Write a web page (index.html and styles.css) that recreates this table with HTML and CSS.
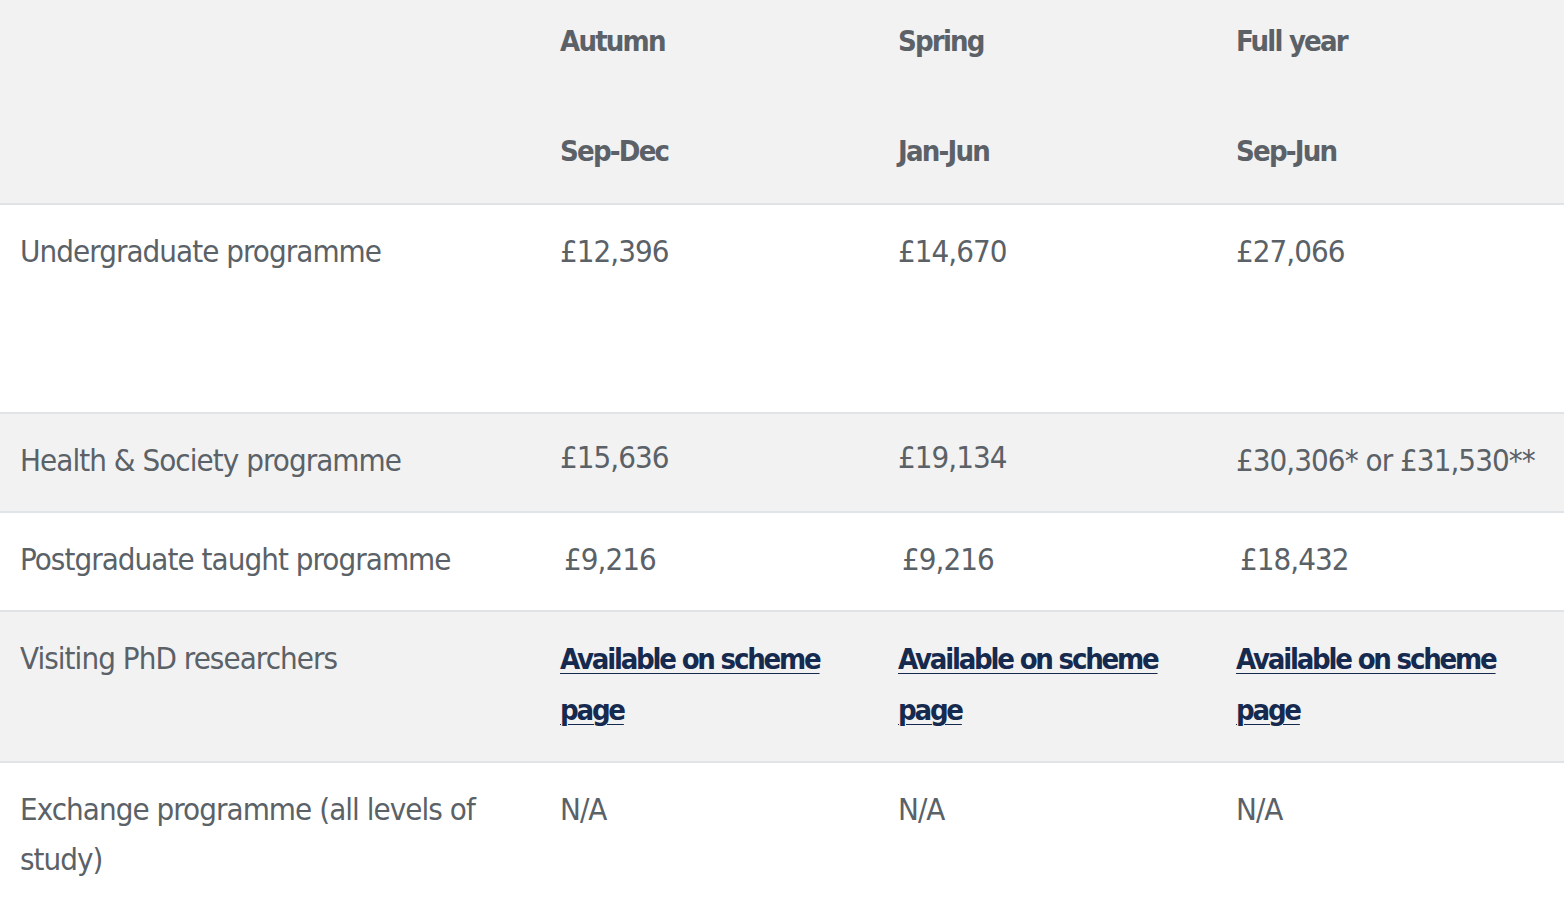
FILE: index.html
```html
<!DOCTYPE html>
<html lang="en">
<head>
<meta charset="utf-8">
<title>Fees</title>
<link rel="stylesheet" href="styles.css">
</head>
<body>
<table class="fees">
  <colgroup>
    <col class="c-label">
    <col class="c-term">
    <col class="c-term">
    <col>
  </colgroup>
  <thead>
    <tr class="head-row">
      <th></th>
      <th>Autumn<br><br>Sep-Dec</th>
      <th>Spring<br><br>Jan-Jun</th>
      <th>Full year<br><br>Sep-Jun</th>
    </tr>
  </thead>
  <tbody>
    <tr class="row-white row-tall">
      <td>Undergraduate programme</td>
      <td>£12,396</td>
      <td>£14,670</td>
      <td>£27,066</td>
    </tr>
    <tr class="row-grey">
      <td>Health &amp; Society programme</td>
      <td class="price-up">£15,636</td>
      <td class="price-up">£19,134</td>
      <td class="nowrap">£30,306* or £31,530**</td>
    </tr>
    <tr class="row-white">
      <td>Postgraduate taught programme</td>
      <td class="indent">£9,216</td>
      <td class="indent">£9,216</td>
      <td class="indent">£18,432</td>
    </tr>
    <tr class="row-grey">
      <td>Visiting PhD researchers</td>
      <td><a href="#" class="link">Available on scheme page</a></td>
      <td><a href="#" class="link">Available on scheme page</a></td>
      <td><a href="#" class="link">Available on scheme page</a></td>
    </tr>
    <tr class="row-white">
      <td>Exchange programme (all levels of study)</td>
      <td>N/A</td>
      <td>N/A</td>
      <td>N/A</td>
    </tr>
  </tbody>
</table>
</body>
</html>
```

FILE: styles.css
```css
html, body {
  margin: 0;
  padding: 0;
  background: #ffffff;
}

body {
  font-family: "DejaVu Sans", sans-serif;
  font-stretch: condensed;
  color: #5a6167;
}

.fees {
  width: 100%;
  border-collapse: collapse;
  table-layout: fixed;
}

.c-label { width: 540px; }
.c-term { width: 338px; }

.fees th,
.fees td {
  text-align: left;
  vertical-align: top;
  padding: 21px 20px 26px 20px;
  font-size: 31px;
  line-height: 50px;
  font-weight: 400;
  letter-spacing: -0.95px;
  border-bottom: 2px solid #e1e4e7;
}

.fees th {
  font-weight: 700;
  color: #5b6167;
  font-size: 29px;
  letter-spacing: -1.8px;
  line-height: 55px;
  padding-top: 14px;
  padding-bottom: 24px;
  background: #f2f2f2;
}

.head-row { height: 204px; }

.row-grey td { background: #f2f2f2; }
.row-white td { background: #ffffff; }

.row-tall { height: 209px; }

.fees td.price-up { padding-top: 18px; }

.fees td.indent { padding-left: 24px; }

.fees td.nowrap { white-space: nowrap; padding-right: 0; }

.link {
  color: #152a4e;
  font-weight: 700;
  font-size: 29px;
  letter-spacing: -2.2px;
  text-decoration: underline;
  text-decoration-thickness: 1px;
  text-underline-offset: 4px;
}
```
